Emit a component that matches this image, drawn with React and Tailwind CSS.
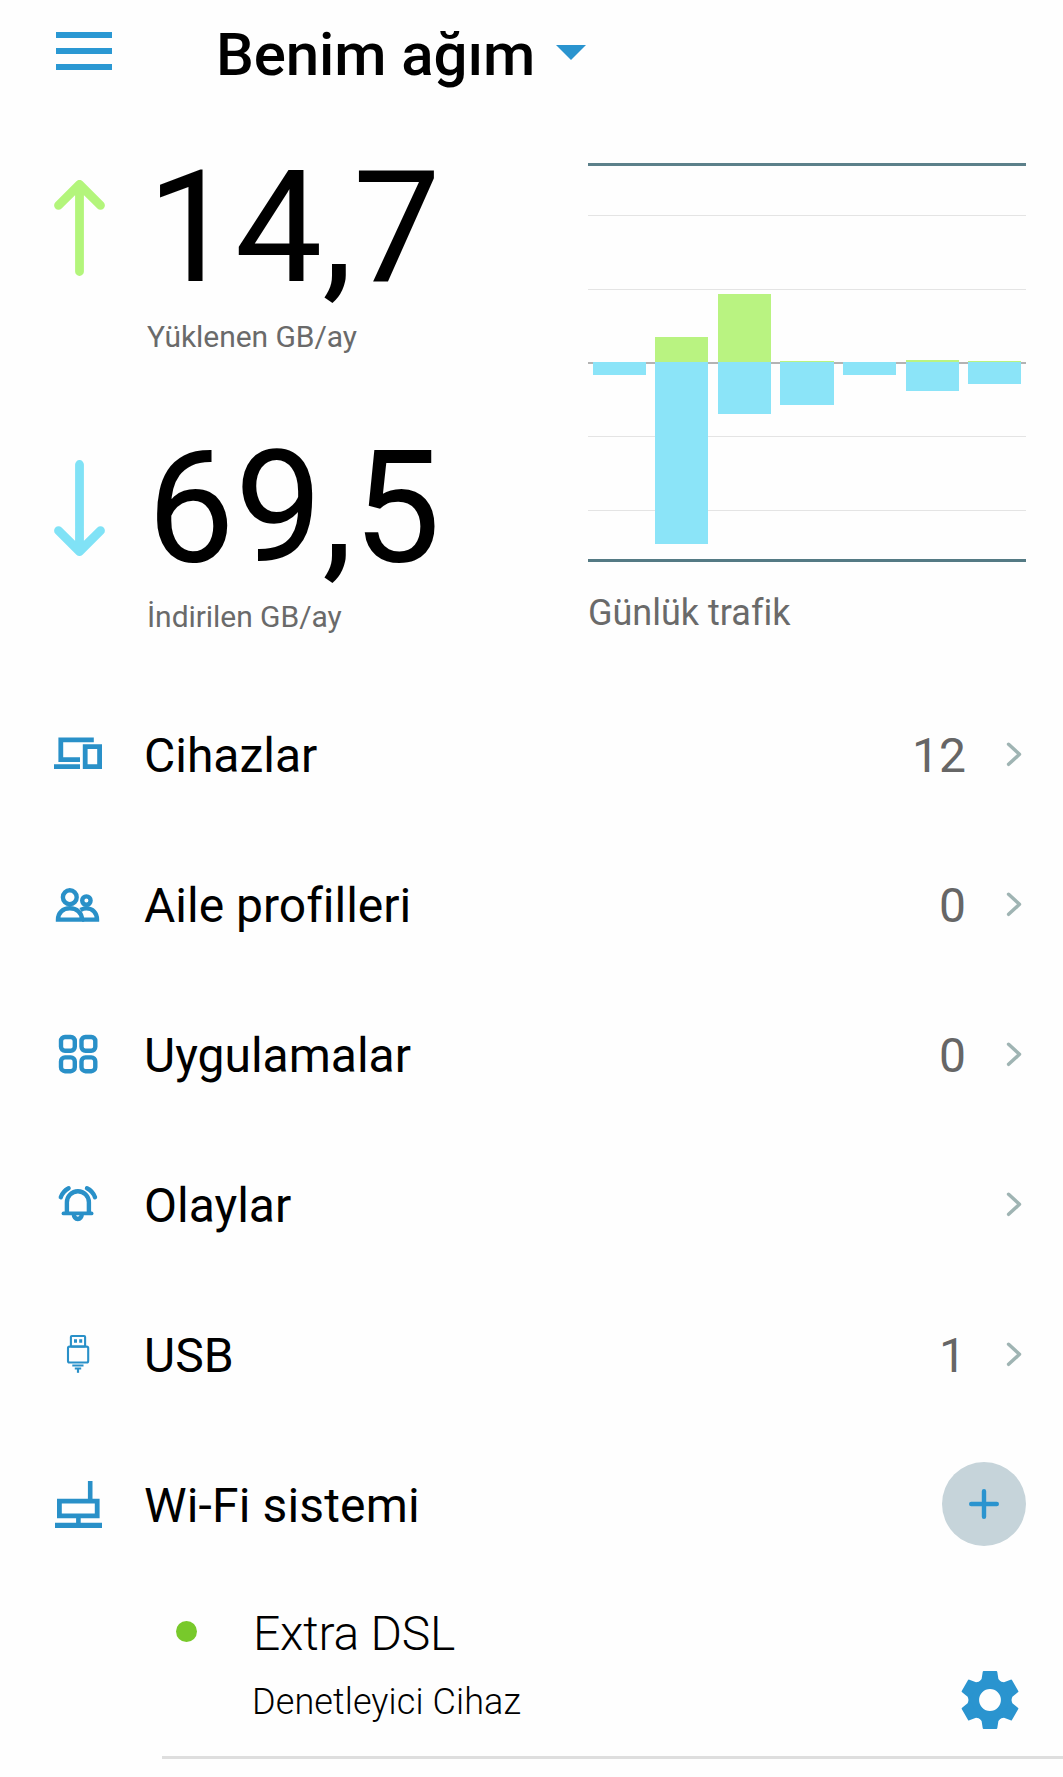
import React from 'react';

const BLUE = '#2a94cf';

const traffic = [
    { x: 5, w: 53, up: 0, down: 13 },
    { x: 67, w: 53, up: 25, down: 182 },
    { x: 130, w: 53, up: 68, down: 52 },
    { x: 192, w: 54, up: 1, down: 43 },
    { x: 255, w: 53, up: 0, down: 13 },
    { x: 318, w: 53, up: 2, down: 29 },
    { x: 380, w: 53, up: 1, down: 22 },
];

const RowIcon = ({ children }) => (
    <svg className="w-12 h-12 shrink-0 overflow-visible" viewBox="0 0 48 48" fill="none" stroke="#2990c8" strokeWidth="4.4">
        {children}
    </svg>
);

const DevicesIcon = () => (
    <RowIcon>
        <path d="M39.8 9.8H6.8V29.7H26M0 36.6H26" strokeWidth="4.8" />
        <path d="M31.2 16.7H45.6V36.6H31.2Z" strokeWidth="4.8" />
    </RowIcon>
);

const FamilyIcon = () => (
    <RowIcon>
        <circle cx="15.8" cy="17.2" r="6.9" />
        <circle cx="32.4" cy="20.6" r="4.2" />
        <path d="M4 39.6C4 32.5 9 28.3 15.8 28.3S28 32.5 28 39.6Z" />
        <path d="M26.5 30C28.5 28.9 30.3 28.4 32.4 28.4C38.6 28.4 43 32.8 43 39.6H28" />
    </RowIcon>
);

const AppsIcon = () => (
    <RowIcon>
        <rect x="7" y="7" width="13.8" height="13.8" rx="4" />
        <rect x="27.5" y="7" width="13.8" height="13.8" rx="4" />
        <rect x="7" y="27.4" width="13.8" height="13.8" rx="4" />
        <rect x="27.5" y="27.4" width="13.8" height="13.8" rx="4" />
    </RowIcon>
);

const BellIcon = () => (
    <RowIcon>
        <path d="M12.9 33V22.3a11 11 0 0 1 22 0V33" />
        <path d="M9.5 33.4H37.6" strokeLinecap="round" strokeWidth="3.8" />
        <path d="M19.8 34a4 5 0 0 0 8 0" />
        <path d="M14.6 8.2Q9 11 6.8 17.2M33 8.2Q38.8 11 41 17.2" strokeLinecap="round" />
    </RowIcon>
);

const UsbIcon = () => (
    <RowIcon>
        <rect x="16.9" y="6" width="14.2" height="10.5" rx="1" strokeWidth="2.1" />
        <rect x="14" y="16.6" width="20.2" height="15.9" rx="1.5" strokeWidth="2.1" />
        <path d="M20 11h3M25.2 11h3" strokeWidth="3.3" />
        <path d="M18.3 35.5h11.2M20.8 38.6h6.4" strokeWidth="2" />
        <path d="M24 38v4.8" strokeWidth="2.2" />
    </RowIcon>
);

const RouterIcon = () => (
    <RowIcon>
        <path d="M5.4 21.2H43.2V35.8H5.4Z" strokeWidth="4.8" />
        <path d="M36.2 1V20M24.4 37V44" strokeWidth="4.6" />
        <path d="M1 45.4H48" strokeWidth="5.2" />
    </RowIcon>
);

const Chevron = () => (
    <svg className="w-[15px] h-6 ml-10 mr-[5px] overflow-visible" viewBox="0 0 15 24" fill="none" stroke="#9fb4b3" strokeWidth="3.5" strokeLinecap="round">
        <path d="M2.6 2.3L13.5 12.3L2.6 22.3" strokeLinejoin="round" />
    </svg>
);

const GearIcon = () => (
    <svg className="w-[58px] h-[58px]" viewBox="-29 -29 58 58">
        <circle r="16.1" fill="none" stroke={BLUE} strokeWidth="10.4" />
        {[0, 60, 120, 180, 240, 300].map((a) => (
            <path key={a} d="M-6.3-29H6.3Q7.2-29 7.3-28L8.4-21L11-18H-11L-8.4-21L-7.3-28Q-7.2-29-6.3-29Z" fill={BLUE} transform={`rotate(${a})`} />
        ))}
    </svg>
);

const Stat = ({ value, label, color, down }) => (
    <div className="flex h-[280px]">
        <svg className="w-[51px] h-24 mt-[30px]" viewBox="0 0 51 96" fill="none" stroke={color} strokeWidth="8.8" strokeLinecap="round" strokeLinejoin="round">
            {down ? (
                <path d="M25.5 4.5V91.5M4.5 70.7L25.5 91.5L46.5 70.7" />
            ) : (
                <path d="M25.5 91.5V4.5M4.5 25.3L25.5 4.5L46.5 25.3" />
            )}
        </svg>
        <div className="ml-[42px]">
            <div className="text-[156px] leading-[156px] text-black">{value}</div>
            <div className="mt-[13px] text-3xl leading-9 tracking-[-0.05px] text-[#6a6a6a]">{label}</div>
        </div>
    </div>
);

const TrafficChart = () => (
    <svg className="block w-[438px] h-[399px]" viewBox="0 0 438 399" shapeRendering="crispEdges">
        {[52, 126, 273, 347].map((y) => (
            <rect key={y} x="0" y={y} width="438" height="1" fill="#e4e4e4" />
        ))}
        <rect x="0" y="199" width="438" height="2" fill="#b3b3b3" />
        <rect x="0" y="0" width="438" height="3" fill="#5c808a" />
        <rect x="0" y="396" width="438" height="3" fill="#547a84" />
        {traffic.map((d) => (
            <g key={d.x}>
                <rect x={d.x} y={199 - d.up} width={d.w} height={d.up} fill="#b9f381" />
                <rect x={d.x} y="199" width={d.w} height={d.down} fill="#8be4f8" />
            </g>
        ))}
    </svg>
);

const rows = [
    { label: 'Cihazlar', icon: DevicesIcon, count: '12' },
    { label: 'Aile profilleri', icon: FamilyIcon, count: '0' },
    { label: 'Uygulamalar', icon: AppsIcon, count: '0' },
    { label: 'Olaylar', icon: BellIcon },
    { label: 'USB', icon: UsbIcon, count: '1' },
];

const App = () => {
    return (
        <div className="w-[1063px] h-[1777px] overflow-hidden bg-[#fefefe] text-black font-['Roboto',sans-serif] [font-variant-ligatures:none]">
            <header className="flex items-center h-[102px] pl-14">
                <div className="flex flex-col gap-2.5">
                    <div className="w-14 h-1.5 bg-[#2a98d3]" />
                    <div className="w-14 h-1.5 bg-[#2a98d3]" />
                    <div className="w-14 h-1.5 bg-[#2a98d3]" />
                </div>
                <h1 className="ml-[104px] pt-[7px] text-6xl font-medium tracking-[-0.1px] whitespace-nowrap">Benim ağım</h1>
                <svg className="w-[30px] h-[15px] ml-[21px] mt-0.5" viewBox="0 0 30 15">
                    <path d="M0 0H30L15 15Z" fill={BLUE} />
                </svg>
            </header>

            <section className="flex justify-between h-[577px] pl-[54px] pr-[37px]">
                <div className="pt-12">
                    <Stat value="14,7" label="Yüklenen GB/ay" color="#b3f57b" />
                    <Stat value="69,5" label="İndirilen GB/ay" color="#80e2f6" down />
                </div>
                <div className="pt-[61px]">
                    <TrafficChart />
                    <div className="mt-[33px] text-4xl leading-9 text-[#6a6a6a]">Günlük trafik</div>
                </div>
            </section>

            <section>
                {rows.map(({ label, icon: Icon, count }) => (
                    <div key={label} className="flex items-center h-[150px] pl-[54px] pr-[37px]">
                        <Icon />
                        <span className="ml-[42px] pt-1 text-5xl">{label}</span>
                        <span className="ml-auto pt-1 text-5xl text-[#666]">{count}</span>
                        <Chevron />
                    </div>
                ))}
                <div className="flex items-center h-[150px] pl-[54px] pr-[37px]">
                    <RouterIcon />
                    <span className="ml-[42px] pt-1 text-5xl tracking-[0.15px]">Wi-Fi sistemi</span>
                    <button className="flex items-center justify-center w-[84px] h-[84px] ml-auto rounded-full bg-[#c6d4da]">
                        <svg className="w-[30px] h-[30px]" viewBox="0 0 30 30" stroke={BLUE} strokeWidth="4.4" strokeLinecap="round">
                            <path d="M15 2.2V27.8M2.2 15H27.8" />
                        </svg>
                    </button>
                </div>
            </section>

            <section className="flex h-[180px] ml-[162px] pr-[44px] border-b-3 border-[#dedede]">
                <div className="w-[21px] h-[21px] mt-[42px] ml-3.5 rounded-full bg-[#78c92b]" />
                <div className="pt-[31px] ml-[55px] font-light">
                    <div className="pl-px text-5xl leading-[48px] tracking-[-0.2px]">Extra DSL</div>
                    <div className="mt-[26px] text-4xl leading-9 tracking-[0.1px]">Denetleyici Cihaz</div>
                </div>
                <div className="mt-[92px] ml-auto">
                    <GearIcon />
                </div>
            </section>
        </div>
    );
};

export default App;
